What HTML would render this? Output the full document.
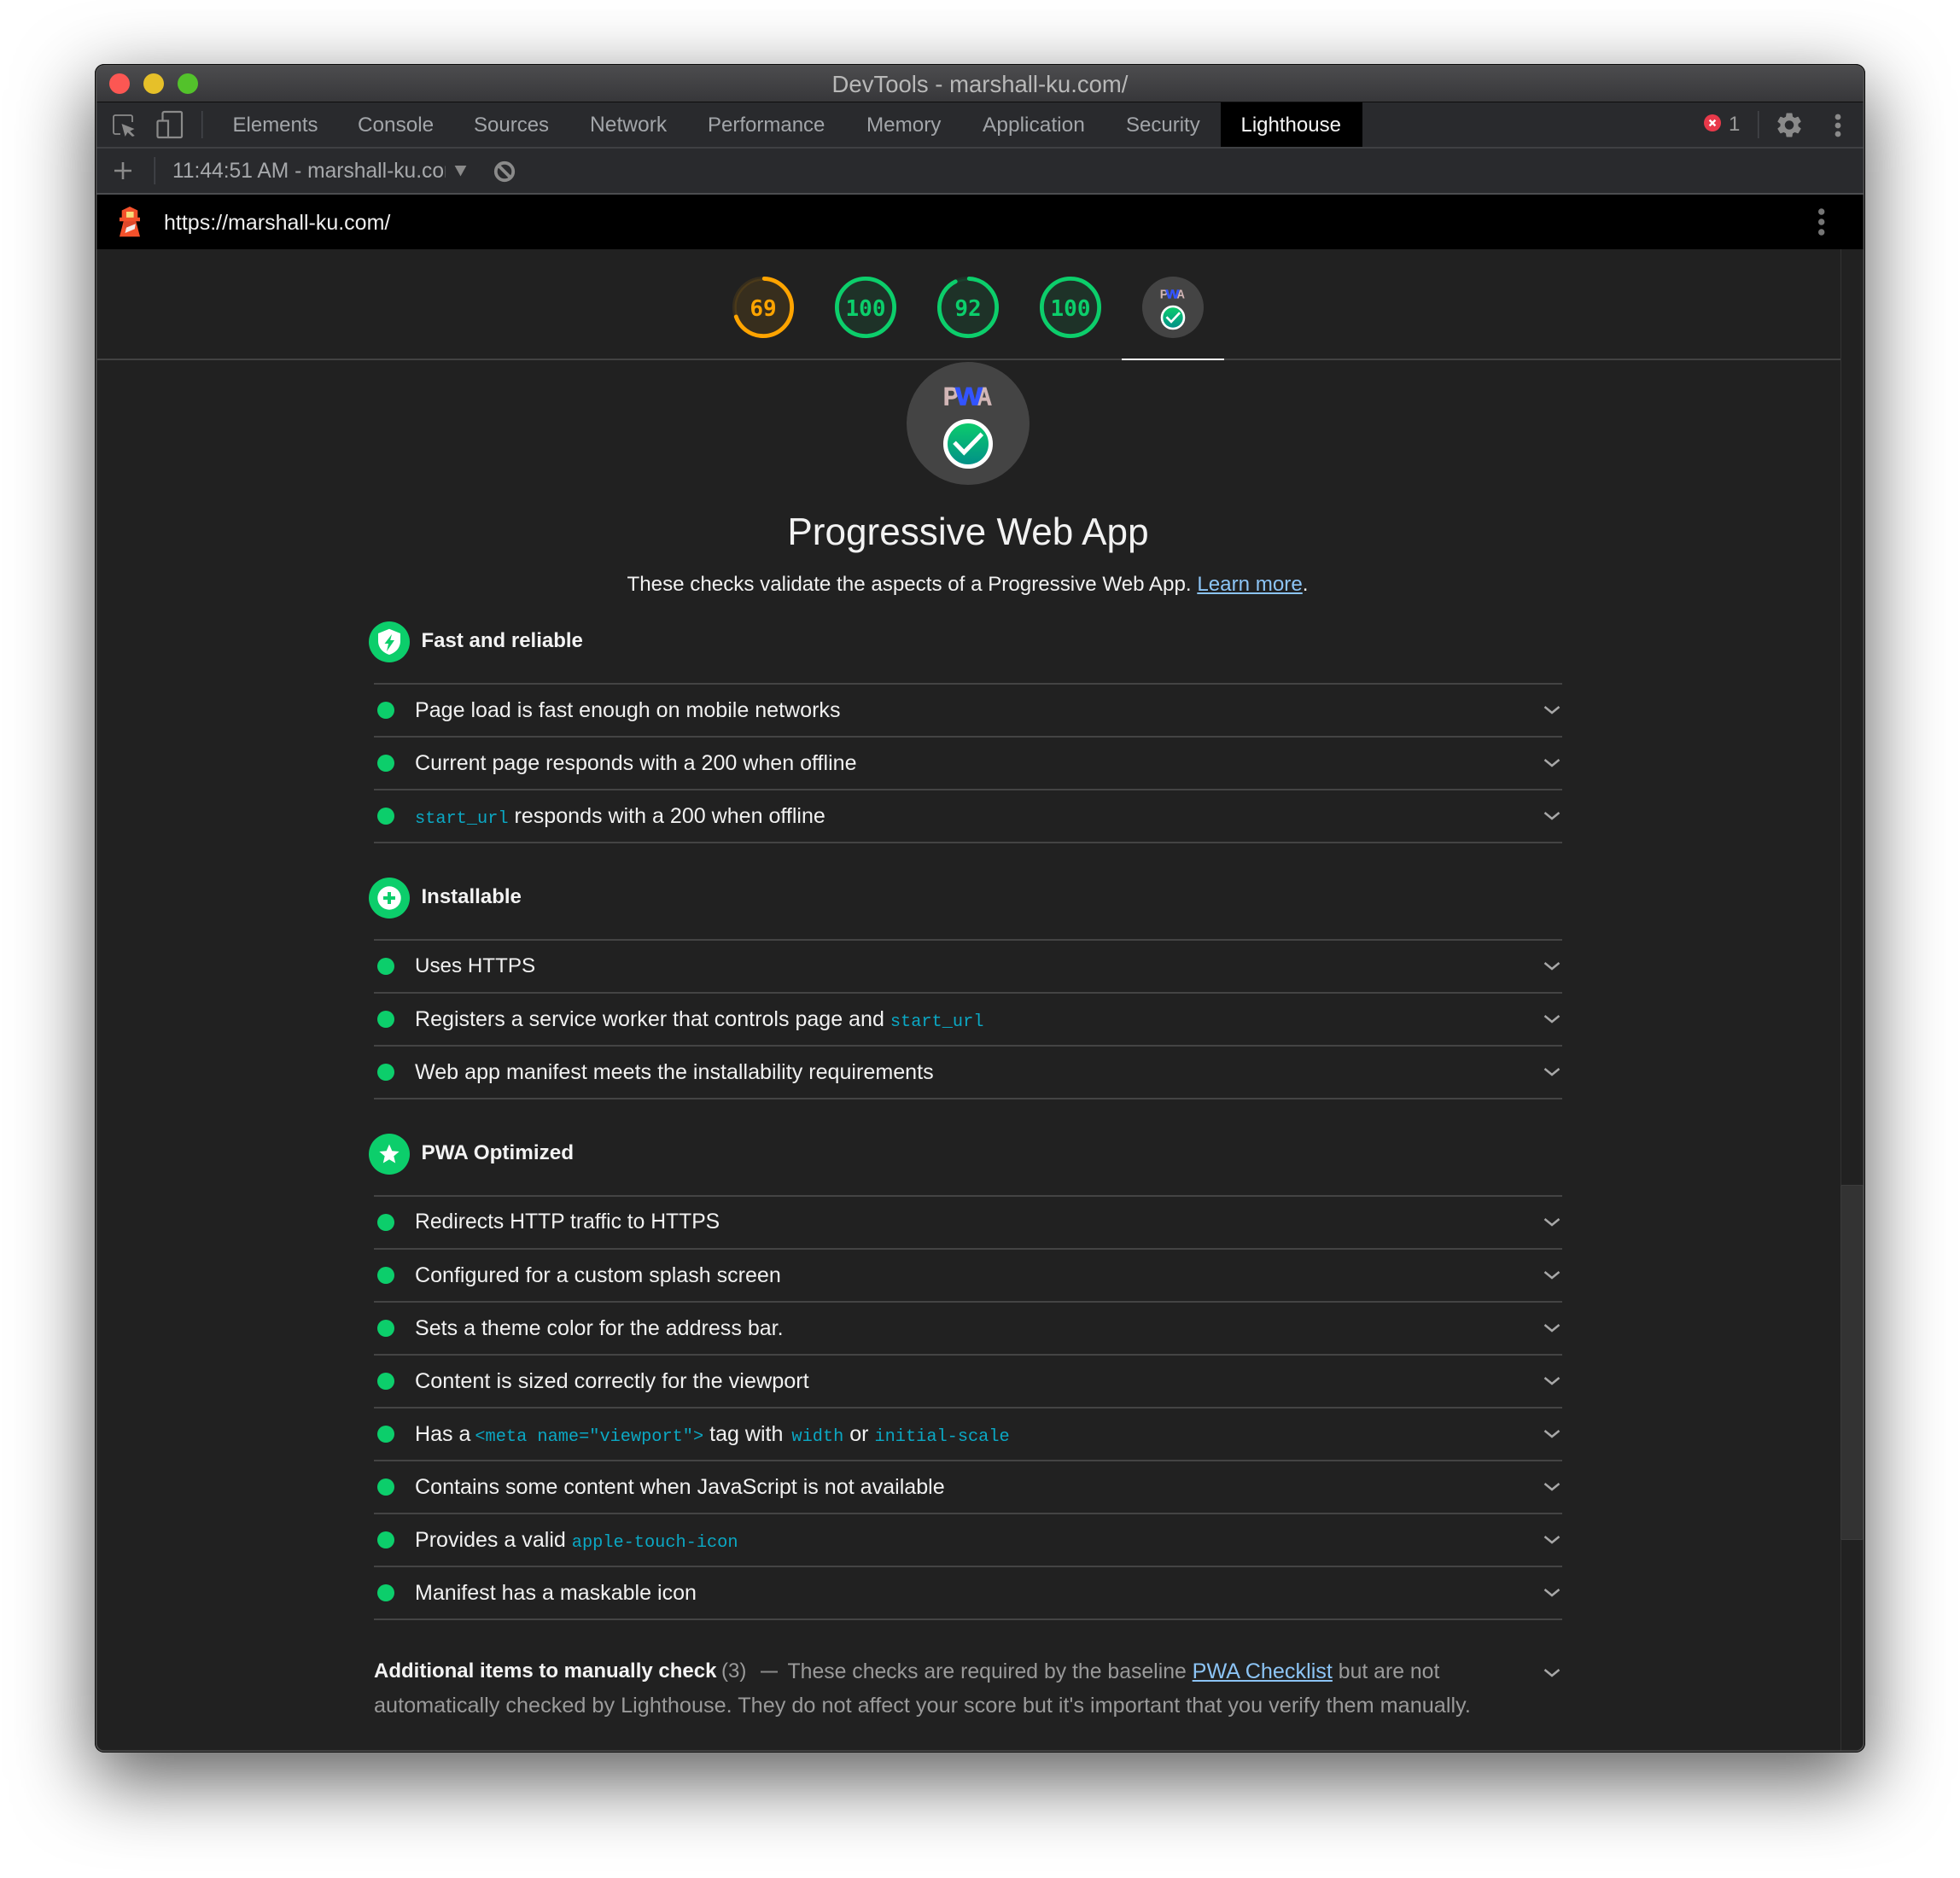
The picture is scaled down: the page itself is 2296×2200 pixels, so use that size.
<!DOCTYPE html>
<html lang="en">
<head>
<meta charset="utf-8">
<title>DevTools - marshall-ku.com/</title>
<style>
html,body{margin:0;padding:0;background:#fff}
body{position:relative;width:2296px;height:2200px;overflow:hidden;font-family:"Liberation Sans",Arial,sans-serif}
#win{position:absolute;left:111px;top:75px;width:2074px;height:1978px;border-radius:11px;background:#212121;box-shadow:0 30px 88px 4px rgba(0,0,0,.62)}
#win:after{content:"";position:absolute;inset:0;border-radius:11px;box-shadow:inset 0 0 0 1px #0a0a0a,inset 0 0 0 2.5px #505050;pointer-events:none;z-index:9}
.a{position:absolute}
#bar{left:0;top:0;width:2074px;height:44px;border-radius:11px 11px 0 0;background:linear-gradient(#4d4d4f,#37373a);border-bottom:1px solid #0e0e0e;box-sizing:content-box}
#tabs{left:0;top:45px;width:2074px;height:52px;background:#292a2d}
#l1{left:0;top:97px;width:2074px;height:2px;background:#3f4043}
#tool{left:0;top:99px;width:2074px;height:52px;background:#292a2d}
#l2{left:0;top:151px;width:2074px;height:2px;background:#4c4d50}
#lh{left:0;top:153px;width:2074px;height:64px;background:#000}
#track{left:2045px;top:217px;width:1px;height:1760px;background:#333}
#thumb{left:2045px;top:1313px;width:27px;height:416px;background:#333;border:1px solid #3c3c3c;box-sizing:border-box;border-radius:2px}
.t{position:absolute;white-space:nowrap;line-height:40px;font-size:24px;color:#f1f1f1}
.tab{color:#a2a5a9}
.row{left:486px;font-size:25.05px;margin-top:1px}
.sec{left:493.5px;font-weight:700;color:#f3f3f3;margin-top:1px}
code{font-family:"Liberation Mono",monospace;font-size:20.3px;color:#0ba8c4}
.ln{position:absolute;left:438px;width:1392px;height:1.6px;background:#444}
.dot{position:absolute;left:442px;width:20px;height:20px;border-radius:50%;background:#0cce6b}
.sc{position:absolute;left:432px;width:48px;height:48px;border-radius:50%;background:#0cce6b}
a{color:#8cc4f5;text-decoration:underline}
#ov{position:absolute;left:0;top:0;z-index:5}
</style>
</head>
<body>
<div id="win">
<div class="a" id="bar"></div>
<div class="a" id="tabs"></div>
<div class="a" id="l1"></div>
<div class="a" id="tool"></div>
<div class="a" id="l2"></div>
<div class="a" id="lh"></div>
<div class="a" style="left:1319px;top:45px;width:166px;height:52px;background:#000"></div>
<div class="a" id="track"></div>
<div class="a" id="thumb"></div>
<div class="a" style="left:3px;top:345px;width:2042px;height:2px;background:#424242"></div>
<div class="a" style="left:1203px;top:344.5px;width:120px;height:2.5px;background:#fff"></div>
</div>

<svg id="ov" width="2296" height="2200" viewBox="0 0 2296 2200" xmlns="http://www.w3.org/2000/svg">
<defs>
<linearGradient id="g1" x1="0" y1="0" x2="0" y2="1"><stop offset="0" stop-color="#0cce6b"/><stop offset="1" stop-color="#018e89"/></linearGradient>
</defs>
<circle cx="140" cy="98" r="12" fill="#fc5753"/>
<circle cx="180" cy="98" r="12" fill="#e6c029"/>
<circle cx="220" cy="98" r="12" fill="#53c22b"/>

<g fill="none" stroke="#8a8a8a" stroke-width="1.8">
<path d="M141 157H135a2 2 0 0 1-2-2V137a2 2 0 0 1 2-2h18a2 2 0 0 1 2 2v6"/>
</g>
<path d="M142.5 145L157.5 151L152.3 153.6L157.8 159L155 160L149.5 155L146.6 160Z" fill="#8a8a8a"/>
<path d="M190.5 141V133a2 2 0 0 1 2-2h19a1.5 1.5 0 0 1 1.5 1.5V159.5a1.5 1.5 0 0 1-1.5 1.5H186a1.5 1.5 0 0 1-1.5-1.5V143a1.5 1.5 0 0 1 1.5-1.5H197V161" fill="none" stroke="#8a8a8a" stroke-width="2.2"/>
<rect x="236" y="130" width="1.5" height="32" fill="#44454a"/>

<path d="M144 190V210M134 200H154" stroke="#8a8a8a" stroke-width="2.6"/>
<rect x="180.5" y="184" width="1.5" height="32" fill="#44454a"/>
<path d="M532.6 194H546.4L539.5 206.5Z" fill="#8a8a8a"/>
<circle cx="591" cy="201" r="10.2" fill="none" stroke="#8a8a8a" stroke-width="3.8"/>
<path d="M583.5 193.5L598.5 208.5" stroke="#8a8a8a" stroke-width="3.8"/>

<circle cx="2006" cy="144" r="10" fill="#e8394a"/>
<path d="M2002.6 140.6L2009.4 147.4M2009.4 140.6L2002.6 147.4" stroke="#fff" stroke-width="2.4"/>
<rect x="2059" y="130" width="1.5" height="32" fill="#44454a"/>
<g transform="translate(2078.5 129) scale(1.46)">
<path fill="#8a8a8a" d="M19.14 12.94c.04-.3.06-.61.06-.94 0-.32-.02-.64-.07-.94l2.03-1.58a.49.49 0 0 0 .12-.61l-1.92-3.32a.488.488 0 0 0-.59-.22l-2.39.96c-.5-.38-1.03-.7-1.62-.94l-.36-2.54a.484.484 0 0 0-.48-.41h-3.84c-.24 0-.43.17-.47.41l-.36 2.54c-.59.24-1.13.57-1.62.94l-2.39-.96c-.22-.08-.47 0-.59.22L2.74 8.87c-.12.21-.08.47.12.61l2.03 1.58c-.05.3-.09.63-.09.94s.02.64.07.94l-2.03 1.58a.49.49 0 0 0-.12.61l1.92 3.32c.12.22.37.29.59.22l2.39-.96c.5.38 1.03.7 1.62.94l.36 2.54c.05.24.24.41.48.41h3.84c.24 0 .44-.17.47-.41l.36-2.54c.59-.24 1.13-.56 1.62-.94l2.39.96c.22.08.47 0 .59-.22l1.92-3.32c.12-.22.07-.47-.12-.61l-2.01-1.58zM12 15.6c-1.98 0-3.6-1.62-3.6-3.6s1.62-3.6 3.6-3.6 3.6 1.62 3.6 3.6-1.62 3.6-3.6 3.6z"/>
</g>
<g fill="#8a8a8a"><circle cx="2153" cy="137" r="3.4"/><circle cx="2153" cy="147" r="3.4"/><circle cx="2153" cy="157" r="3.4"/></g>
<g fill="#757575"><circle cx="2133.7" cy="248" r="3.7"/><circle cx="2133.7" cy="260" r="3.7"/><circle cx="2133.7" cy="272" r="3.7"/></g>

<path d="M152 242L161.3 246.5V254.7H164V259.3H159.3L164 277.3H140L144.7 259.3H140V254.7H142.7V246.5Z" fill="#f4512b"/>
<rect x="148" y="248" width="8.6" height="6.8" fill="#f7dc7a"/>
<path d="M144.7 259.3H159.3L160.5 264L146 268Z" fill="#e0482a"/>
<path d="M146.5 273L148 266.6L158.8 262.2L157.8 268.2Z" fill="#f3ecea"/>

<g transform="translate(894 360)"><circle r="33.6" fill="#ffa400" fill-opacity=".1" stroke="#ffa400" stroke-opacity=".1" stroke-width="4.8"/><circle r="33.6" fill="none" stroke="#ffa400" stroke-width="4.8" stroke-linecap="round" stroke-dasharray="145.7 211.2" transform="rotate(-87.9)"/></g>
<g transform="translate(1014 360)"><circle r="33.6" fill="#0cce6b" fill-opacity=".1" stroke="none"/><circle r="33.6" fill="none" stroke="#0cce6b" stroke-width="4.8"/></g>
<g transform="translate(1134 360)"><circle r="33.6" fill="#0cce6b" fill-opacity=".1" stroke="#0cce6b" stroke-opacity=".1" stroke-width="4.8"/><circle r="33.6" fill="none" stroke="#0cce6b" stroke-width="4.8" stroke-linecap="round" stroke-dasharray="194.3 211.2" transform="rotate(-87.9)"/></g>
<g transform="translate(1254 360)"><circle r="33.6" fill="#0cce6b" fill-opacity=".1" stroke="none"/><circle r="33.6" fill="none" stroke="#0cce6b" stroke-width="4.8"/></g>
<g font-family="'DejaVu Sans Mono',monospace" font-size="26" font-weight="700" text-anchor="middle">
<text x="894" y="370" fill="#ffa400">69</text>
<text x="1014" y="370" fill="#0cce6b">100</text>
<text x="1134" y="370" fill="#0cce6b">92</text>
<text x="1254" y="370" fill="#0cce6b">100</text>
</g>

<circle cx="1374" cy="360" r="36" fill="#444"/>
<g font-family="'Liberation Sans',sans-serif" font-weight="700" font-size="15">
<text x="1358.8" y="349.3" fill="#d2b6b6" textLength="9.5" lengthAdjust="spacingAndGlyphs">P</text>
<text x="1378.5" y="349.3" fill="#d2b6b6" textLength="9.5" lengthAdjust="spacingAndGlyphs">A</text>
<text x="1365.5" y="349.3" fill="#3354ff" stroke="#3354ff" stroke-width=".4" textLength="16" lengthAdjust="spacingAndGlyphs">W</text>
</g>
<circle cx="1374" cy="372" r="13" fill="url(#g1)" stroke="#fff" stroke-width="2.6"/>
<path d="M1366.5 371.3L1372 377L1382 366.3" fill="none" stroke="#fff" stroke-width="2.6"/>

<circle cx="1134" cy="496" r="72" fill="#444"/>
<g font-family="'Liberation Sans',sans-serif" font-weight="700" font-size="30">
<text x="1105" y="474.4" fill="#d2b6b6" stroke="#d2b6b6" stroke-width=".8" textLength="18" lengthAdjust="spacingAndGlyphs">P</text>
<text x="1144" y="474.4" fill="#d2b6b6" stroke="#d2b6b6" stroke-width=".8" textLength="18" lengthAdjust="spacingAndGlyphs">A</text>
<text x="1119" y="474.4" fill="#3354ff" stroke="#3354ff" stroke-width=".8" textLength="32" lengthAdjust="spacingAndGlyphs">W</text>
</g>
<circle cx="1134" cy="520" r="26.5" fill="url(#g1)" stroke="#fff" stroke-width="5"/>
<path d="M1118 518.3L1129.3 530L1150.3 508.3" fill="none" stroke="#fff" stroke-width="5"/>

<path d="M456 736.7L443 742V751C443 759 449 765 456 767C463 765 469 759 469 751V742Z" fill="#fff"/>
<path d="M459 743L450.5 754H455L453 763L462 750H457.2Z" fill="#0cce6b"/>
</svg>

<div class="t tab" style="left:272.5px;top:127px">Elements</div>
<div class="t tab" style="left:419px;top:127px;font-size:24.3px">Console</div>
<div class="t tab" style="left:555px;top:127px">Sources</div>
<div class="t tab" style="left:691px;top:127px;font-size:24.6px">Network</div>
<div class="t tab" style="left:829px;top:127px">Performance</div>
<div class="t tab" style="left:1015px;top:127px;font-size:24.2px">Memory</div>
<div class="t tab" style="left:1151px;top:127px;font-size:24.5px">Application</div>
<div class="t tab" style="left:1319px;top:127px">Security</div>
<div class="t" style="left:1453.5px;top:127px;color:#f5f5f5;z-index:6">Lighthouse</div>
<div class="t" style="left:2025px;top:126px;color:#9a9a9a;z-index:6">1</div>
<div class="t" style="left:948px;top:79px;width:400px;text-align:center;font-size:27.5px;color:#b8b8b8;z-index:6">DevTools - marshall-ku.com/</div>
<div class="t" style="left:202px;top:181px;width:320px;overflow:hidden;font-size:24.6px;color:#a6a8ab;z-index:6">11:44:51 AM - marshall-ku.com</div>
<div class="t" style="left:192px;top:241px;font-size:25px;color:#efefef;z-index:6">https://marshall-ku.com/</div>

<div class="t" style="left:734px;top:594px;width:800px;text-align:center;line-height:60px;font-size:44.1px;color:#f2f2f2">Progressive Web App</div>
<div class="t" style="left:533.5px;top:665px;width:1200px;text-align:center;font-size:24.15px;color:#f1f1f1">These checks validate the aspects of a Progressive Web App. <a>Learn more</a>.</div>

<div class="sc" style="top:728px"></div>
<div class="t sec" style="top:729.5px">Fast and reliable</div>
<div class="ln" style="top:800px"></div>
<div class="dot" style="top:822px"></div><div class="t row" style="top:811px">Page load is fast enough on mobile networks</div>
<div class="ln" style="top:862px"></div>
<div class="dot" style="top:884px"></div><div class="t row" style="top:873px">Current page responds with a 200 when offline</div>
<div class="ln" style="top:924px"></div>
<div class="dot" style="top:946px"></div><div class="t row" style="top:935px"><code>start_url</code> responds with a 200 when offline</div>
<div class="ln" style="top:986px"></div>

<div class="sc" style="top:1028px"></div>
<div class="t sec" style="top:1029.5px">Installable</div>
<div class="ln" style="top:1100px"></div>
<div class="dot" style="top:1122px"></div><div class="t row" style="top:1111px;font-size:24.2px">Uses HTTPS</div>
<div class="ln" style="top:1162px"></div>
<div class="dot" style="top:1184px"></div><div class="t row" style="top:1173px">Registers a service worker that controls page and <code>start_url</code></div>
<div class="ln" style="top:1224px"></div>
<div class="dot" style="top:1246px"></div><div class="t row" style="top:1235px;font-size:25.1px">Web app manifest meets the installability requirements</div>
<div class="ln" style="top:1286px"></div>

<div class="sc" style="top:1328px"></div>
<div class="t sec" style="top:1329.5px;font-size:24.3px">PWA Optimized</div>
<div class="ln" style="top:1400px"></div>
<div class="dot" style="top:1422px"></div><div class="t row" style="top:1411px;font-size:24.7px">Redirects HTTP traffic to HTTPS</div>
<div class="ln" style="top:1462px"></div>
<div class="dot" style="top:1484px"></div><div class="t row" style="top:1473px">Configured for a custom splash screen</div>
<div class="ln" style="top:1524px"></div>
<div class="dot" style="top:1546px"></div><div class="t row" style="top:1535px">Sets a theme color for the address bar.</div>
<div class="ln" style="top:1586px"></div>
<div class="dot" style="top:1608px"></div><div class="t row" style="top:1597px;font-size:25.25px">Content is sized correctly for the viewport</div>
<div class="ln" style="top:1648px"></div>
<div class="dot" style="top:1670px"></div><div class="t row" style="top:1659px">Has a <code style="margin-left:-2px">&lt;meta name="viewport"&gt;</code> tag with <code style="margin-left:3px">width</code> or <code>initial-scale</code></div>
<div class="ln" style="top:1710px"></div>
<div class="dot" style="top:1732px"></div><div class="t row" style="top:1721px;font-size:25.1px">Contains some content when JavaScript is not available</div>
<div class="ln" style="top:1772px"></div>
<div class="dot" style="top:1794px"></div><div class="t row" style="top:1783px">Provides a valid <code>apple-touch-icon</code></div>
<div class="ln" style="top:1834px"></div>
<div class="dot" style="top:1856px"></div><div class="t row" style="top:1845px">Manifest has a maskable icon</div>
<div class="ln" style="top:1896px"></div>

<div class="t" style="left:438px;top:1938px;font-weight:700;color:#f3f3f3">Additional items to manually check</div>
<div class="t" style="left:845px;top:1938px;color:#9a9a9a">(3)</div>
<div class="t" style="left:891px;top:1938px;font-size:20px;font-weight:700;color:#8a8a8a">—</div>
<div class="t" style="left:922.5px;top:1938px;font-size:24.8px;color:#9a9a9a">These checks are required by the baseline <a style="font-size:25.2px">PWA Checklist</a> but are not</div>
<div class="t" style="left:438px;top:1978px;font-size:25.25px;color:#9a9a9a">automatically checked by Lighthouse. They do not affect your score but it's important that you verify them manually.</div>

<svg class="a" style="left:0;top:0;z-index:6" width="2296" height="2200" viewBox="0 0 2296 2200" xmlns="http://www.w3.org/2000/svg">
<circle cx="456" cy="1052" r="13.7" fill="#fff"/>
<path d="M456 1045V1059M449 1052H463" stroke="#0cce6b" stroke-width="4"/>
<path d="M456 1340.5L459.3 1348.3L467.6 1349L461.3 1354.4L463.2 1362.5L456 1358.2L448.8 1362.5L450.7 1354.4L444.4 1349L452.7 1348.3Z" fill="#fff"/>
<g fill="none" stroke="#a8a8a8" stroke-width="2.5">
<path d="M1809.5 828L1818 835L1826.5 828"/>
<path d="M1809.5 890L1818 897L1826.5 890"/>
<path d="M1809.5 952L1818 959L1826.5 952"/>
<path d="M1809.5 1128L1818 1135L1826.5 1128"/>
<path d="M1809.5 1190L1818 1197L1826.5 1190"/>
<path d="M1809.5 1252L1818 1259L1826.5 1252"/>
<path d="M1809.5 1428L1818 1435L1826.5 1428"/>
<path d="M1809.5 1490L1818 1497L1826.5 1490"/>
<path d="M1809.5 1552L1818 1559L1826.5 1552"/>
<path d="M1809.5 1614L1818 1621L1826.5 1614"/>
<path d="M1809.5 1676L1818 1683L1826.5 1676"/>
<path d="M1809.5 1738L1818 1745L1826.5 1738"/>
<path d="M1809.5 1800L1818 1807L1826.5 1800"/>
<path d="M1809.5 1862L1818 1869L1826.5 1862"/>
<path d="M1809.5 1956L1818 1963L1826.5 1956"/>
</g>
</svg>
</body>
</html>
